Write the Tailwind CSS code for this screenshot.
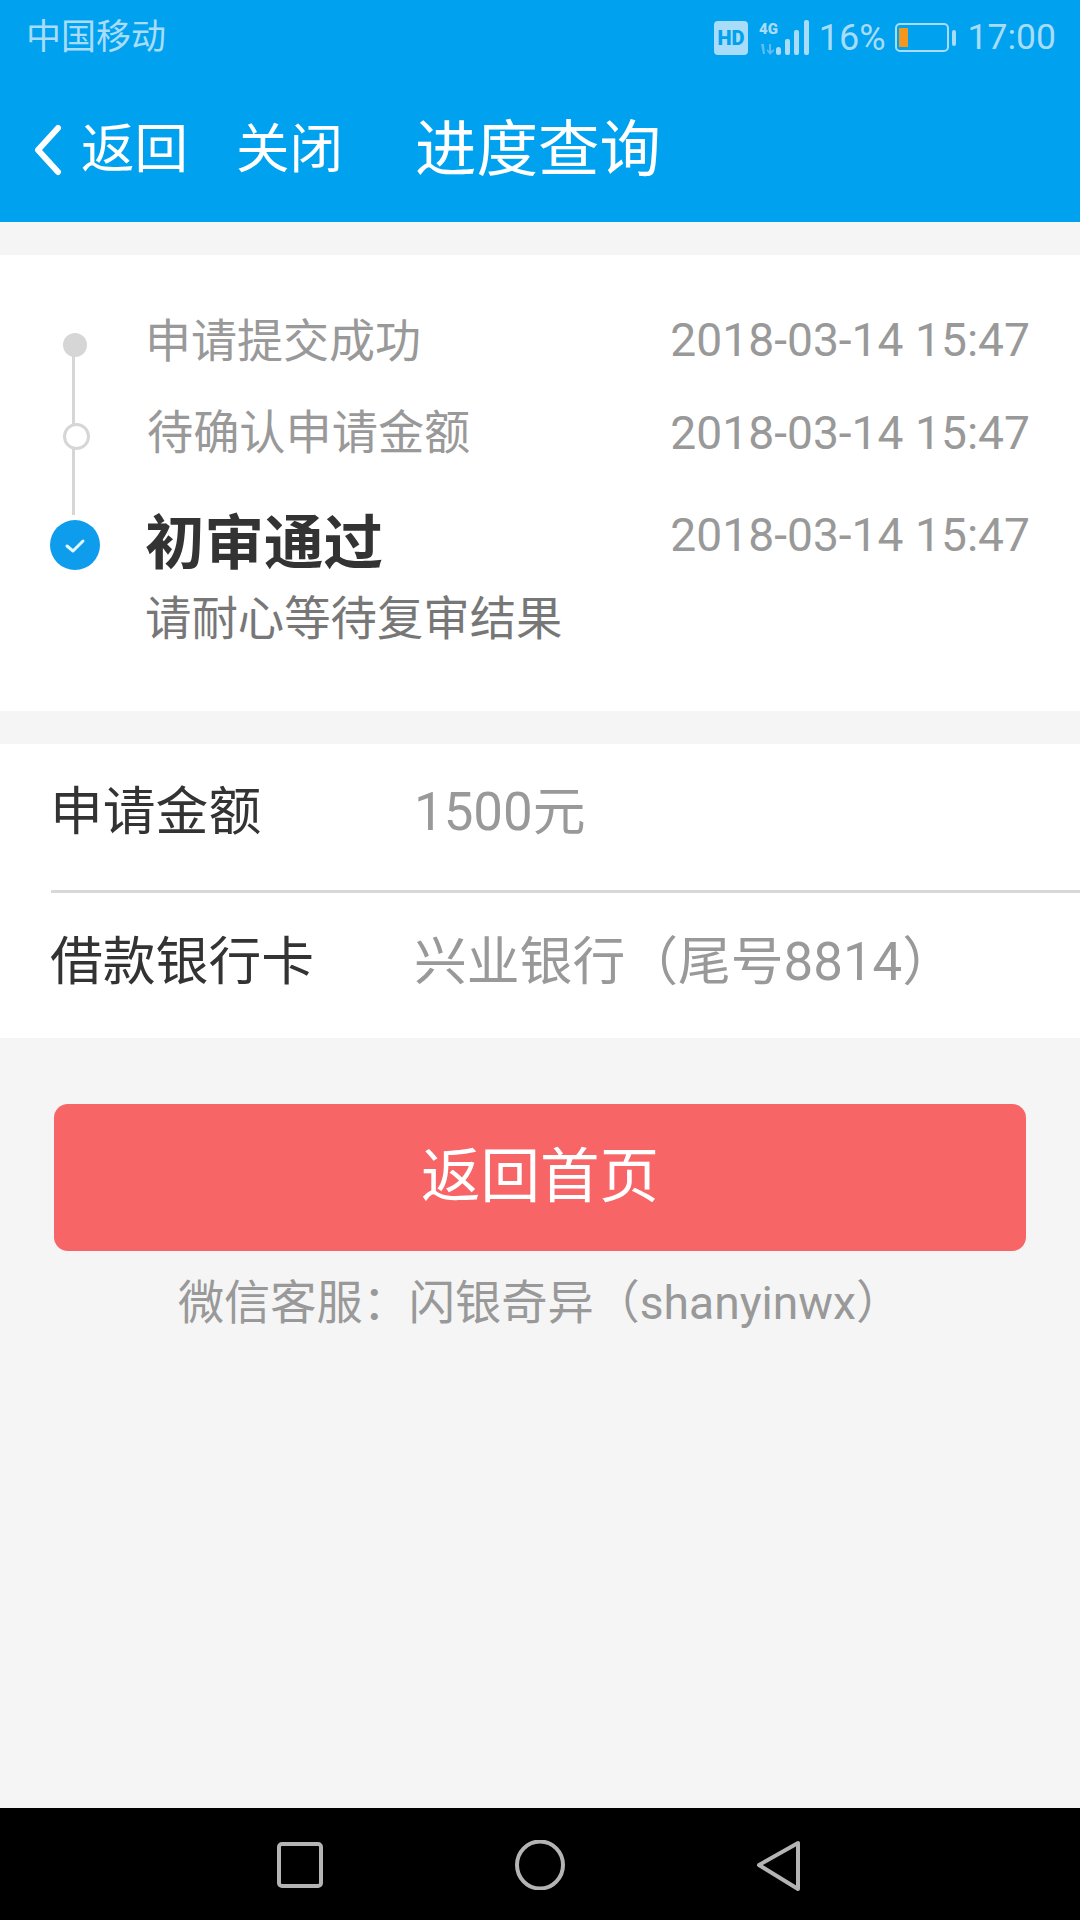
<!DOCTYPE html>
<html lang="zh-CN">
<head>
<meta charset="UTF-8">
<title>进度查询</title>
<script src="https://cdn.jsdelivr.net/npm/@tailwindcss/browser@4"></script>
</head>
<body class="font-['Roboto','Noto_Sans_CJK_SC',sans-serif]">
<div class="w-[1080px] h-[1920px] flex flex-col bg-[#f5f5f5] overflow-hidden">

  <!-- status bar -->
  <div class="h-[74px] shrink-0 bg-[#00a2ef] flex items-center pl-[26px] pr-[24px] pt-[1px] text-[#a8dcf9]">
    <span class="text-[35px] leading-none">中国移动</span>
    <div class="ml-auto flex items-center">
      <svg class="w-[34px] h-[34px]" viewBox="0 0 34 34"><rect width="34" height="34" rx="4" fill="#a8dcf9"/><text x="17" y="24" text-anchor="middle" font-family="Roboto" font-weight="900" font-size="20" fill="#00a2ef">HD</text></svg>
      <svg class="w-[56px] h-[36px] ml-[10px]" viewBox="0 0 56 36" fill="#a8dcf9"><text x="1" y="14" font-family="Roboto" font-weight="900" font-size="15">4G</text><path d="M3 24h3l1 10H5zM11 24h2v7l3-2v2l-4 4-3-4v-2l2 2z" fill="#5cbcf3"/><rect x="18" y="27" width="5" height="8" rx="2.5"/><rect x="27" y="19" width="5" height="16" rx="2"/><rect x="36" y="10" width="5" height="25" rx="2"/><rect x="46" y="0" width="5" height="35" rx="2"/></svg>
      <span class="text-[36px] leading-none ml-[5px]">16%</span>
      <svg class="w-[62px] h-[30px] ml-[9px]" viewBox="0 0 62 30"><rect x="1" y="1" width="52" height="27" rx="4" fill="none" stroke="#a8dcf9" stroke-width="2"/><rect x="4" y="5" width="9" height="19" fill="#f5971f"/><rect x="57" y="7" width="4" height="16" rx="2" fill="#a8dcf9"/></svg>
      <span class="text-[35.5px] leading-none ml-[11px]">17:00</span>
    </div>
  </div>

  <!-- nav bar -->
  <div class="h-[148px] shrink-0 bg-[#00a2ef] flex items-center text-white pt-[4px]">
    <svg class="w-[30px] h-[52px] ml-[33px]" viewBox="0 0 30 52" fill="none" stroke="#fff" stroke-width="6" stroke-linecap="round" stroke-linejoin="round"><path d="M25 4 5 26l20 22"/></svg>
    <span class="text-[53.5px] leading-[60px] ml-[18px] w-[108px]">返回</span>
    <span class="text-[53.5px] leading-[60px] ml-[47px] w-[108px]">关闭</span>
    <span class="text-[61.5px] leading-[70px] ml-[71px]">进度查询</span>
  </div>

  <!-- timeline -->
  <div class="mt-[33px] h-[456px] shrink-0 bg-white relative pt-[53px]">
    <div class="absolute left-[72px] top-[90px] w-[3px] h-[170px] bg-[#d6d6d6]"></div>

    <div class="flex items-center h-[66px] pl-[63px] pr-[50px]">
      <div class="relative w-[24px] h-[24px] mt-[8px] rounded-full bg-[#d6d6d6]"></div>
      <span class="ml-[60px] -translate-x-[2px] text-[46px] text-[#999999]">申请提交成功</span>
      <span class="ml-auto text-[46.2px] text-[#999999]">2018-03-14 15:47</span>
    </div>

    <div class="flex items-center h-[66px] mt-[27px] pl-[63px] pr-[50px]">
      <div class="relative w-[27px] h-[27px] mt-[4px] rounded-full bg-white border-[3px] border-[#d6d6d6]"></div>
      <span class="ml-[57px] text-[46.2px] text-[#999999]">待确认申请金额</span>
      <span class="ml-auto text-[46.2px] text-[#999999]">2018-03-14 15:47</span>
    </div>

    <div class="flex items-start mt-[35px] pl-[50px] pr-[50px]">
      <svg class="relative w-[50px] h-[50px] mt-[18px] shrink-0" viewBox="0 0 50 50"><circle cx="25" cy="25" r="25" fill="#0e9cec"/><path d="M17 26l6 5 10-10" fill="none" stroke="#e4f6ff" stroke-width="3" stroke-linecap="round" stroke-linejoin="round"/></svg>
      <div class="ml-[45px] flex flex-col">
        <span class="text-[59.5px] leading-[84px] font-bold text-[#333333]">初审通过</span>
        <span class="text-[46.4px] leading-[66px] text-[#777777]">请耐心等待复审结果</span>
      </div>
      <span class="ml-auto text-[46.2px] leading-[66px] text-[#999999]">2018-03-14 15:47</span>
    </div>
  </div>

  <!-- details -->
  <div class="mt-[33px] h-[294px] shrink-0 bg-white pl-[51px] flex flex-col">
    <div class="h-[149px] flex items-center border-b-[3px] border-[#d8d8d8] pb-[8px]">
      <span class="w-[364px] -ml-[1px] text-[52.8px] text-[#333333]">申请金额</span>
      <span class="text-[52.8px] text-[#999999]">1500元</span>
    </div>
    <div class="flex-1 flex items-center pb-[6px]">
      <span class="w-[364px] -ml-[1px] text-[52.8px] text-[#333333]">借款银行卡</span>
      <span class="text-[52.8px] text-[#999999]">兴业银行（尾号8814）</span>
    </div>
  </div>

  <!-- action -->
  <button class="mt-[66px] mx-[54px] h-[147px] shrink-0 rounded-[14px] bg-[#f86567] text-white text-[59.5px]">返回首页</button>
  <p class="mt-[19px] text-center text-[46.2px] leading-[66px] text-[#999999]">微信客服：闪银奇异（shanyinwx）</p>

  <!-- android nav -->
  <div class="mt-auto h-[112px] shrink-0 bg-black relative flex">
    <svg class="absolute left-[277px] top-[34px] w-[46px] h-[46px]" viewBox="0 0 46 46"><rect x="2" y="2" width="42" height="42" rx="3" fill="none" stroke="#b4b4b4" stroke-width="4"/></svg>
    <svg class="absolute left-[515px] top-[32px] w-[50px] h-[50px]" viewBox="0 0 50 50"><ellipse cx="25" cy="25" rx="23" ry="23.5" fill="none" stroke="#b4b4b4" stroke-width="4"/></svg>
    <svg class="absolute left-[756px] top-[32px] w-[46px] h-[52px]" viewBox="0 0 46 52"><path d="M42 3v46L3 25z" fill="none" stroke="#b4b4b4" stroke-width="4" stroke-linejoin="round"/></svg>
  </div>
</div>
</body>
</html>
